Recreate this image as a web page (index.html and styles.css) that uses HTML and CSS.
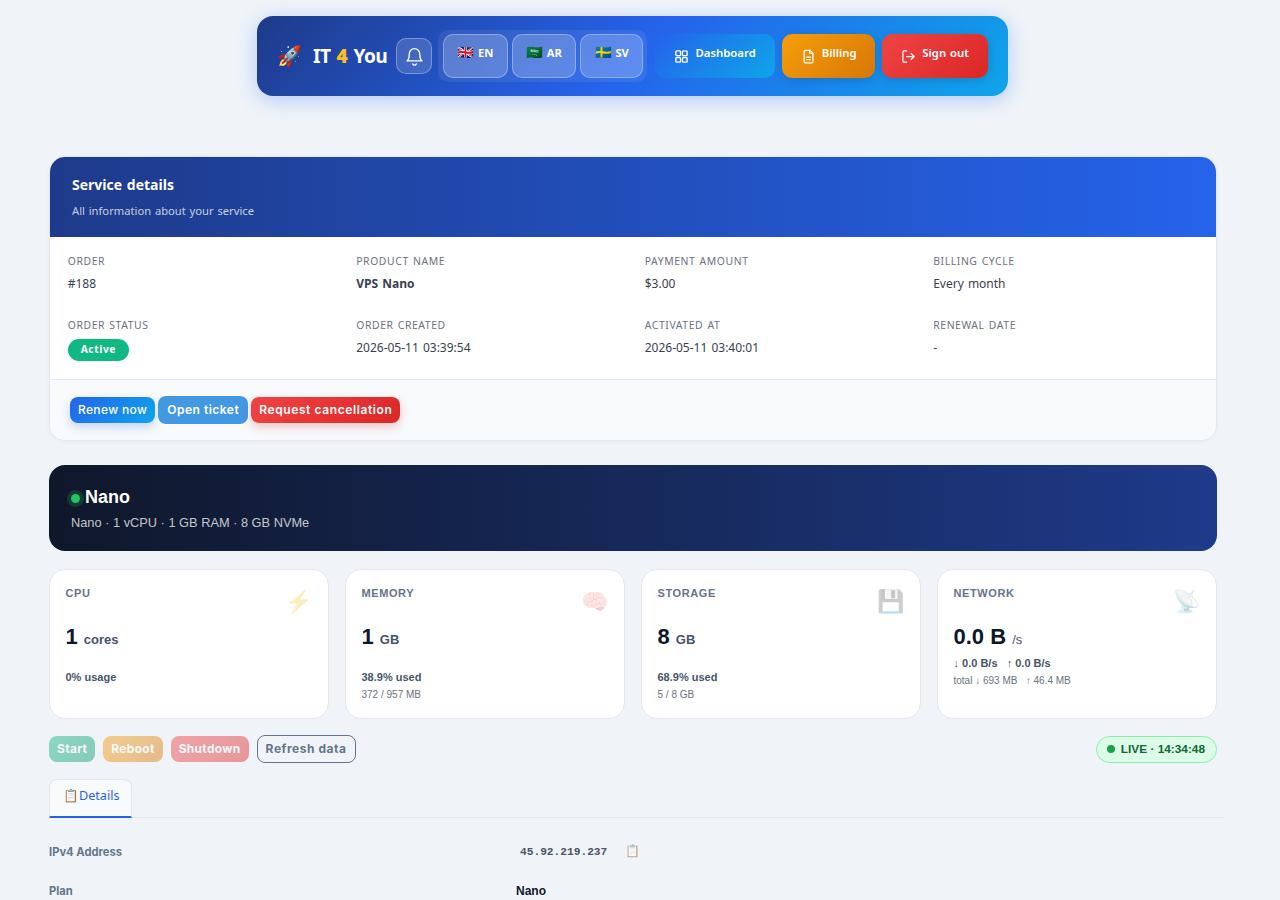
FILE: index.html
```html
<!DOCTYPE html>
<html lang="en">
<head>
    <meta charset="UTF-8">
    <meta name="viewport" content="width=device-width, initial-scale=1.0">
    <title>Service details - IT 4 You</title>
    <link rel="stylesheet" href="styles.css">
</head>
<body>
    <div class="page">
        <!-- Top navigation -->
        <nav class="navbar">
            <a class="brand"><span class="brand-icon">🚀</span><span class="brand-text">IT <b>4</b> You</span></a>
            <button class="bell" aria-label="Notifications">
                <svg width="21" height="21" viewBox="0 0 24 24" fill="none" stroke="currentColor" stroke-width="1.5" stroke-linecap="round" stroke-linejoin="round"><path d="M18 9a6 6 0 0 0-12 0c0 6-2.5 8-2.5 8h17S18 15 18 9"/><path d="M10 20.5a2.2 2.2 0 0 0 4 0"/></svg>
            </button>
            <div class="lang-group">
                <a class="lang"><span class="flag">🇬🇧</span> EN</a>
                <a class="lang"><span class="flag">🇸🇦</span> AR</a>
                <a class="lang"><span class="flag">🇸🇪</span> SV</a>
            </div>
            <a class="nav-btn nav-blue">
                <svg width="15" height="15" viewBox="0 0 24 24" fill="none" stroke="currentColor" stroke-width="2.2" stroke-linejoin="round"><rect x="3" y="3" width="7.5" height="7.5" rx="1.5"/><rect x="13.5" y="3" width="7.5" height="7.5" rx="1.5"/><rect x="3" y="13.5" width="7.5" height="7.5" rx="1.5"/><rect x="13.5" y="13.5" width="7.5" height="7.5" rx="1.5"/></svg>
                <span>Dashboard</span>
            </a>
            <a class="nav-btn nav-orange">
                <svg width="15" height="15" viewBox="0 0 24 24" fill="none" stroke="currentColor" stroke-width="2" stroke-linecap="round" stroke-linejoin="round"><path d="M14 2H7a2 2 0 0 0-2 2v16a2 2 0 0 0 2 2h10a2 2 0 0 0 2-2V7z"/><path d="M14 2v5h5"/><path d="M9 13h6M9 17h6"/></svg>
                <span>Billing</span>
            </a>
            <a class="nav-btn nav-red">
                <svg width="15" height="15" viewBox="0 0 24 24" fill="none" stroke="currentColor" stroke-width="2" stroke-linecap="round" stroke-linejoin="round"><path d="M9 21H5a2 2 0 0 1-2-2V5a2 2 0 0 1 2-2h4"/><path d="M16 17l5-5-5-5"/><path d="M21 12H9"/></svg>
                <span>Sign out</span>
            </a>
        </nav>

        <!-- Service details card -->
        <section class="service-card">
            <div class="service-head">
                <h2>Service details</h2>
                <p>All information about your service</p>
            </div>
            <div class="service-grid">
                <div class="field"><label>Order</label><div>#188</div></div>
                <div class="field"><label>Product name</label><div class="strong">VPS Nano</div></div>
                <div class="field"><label>Payment amount</label><div>$3.00</div></div>
                <div class="field"><label>Billing cycle</label><div>Every month</div></div>
                <div class="field"><label>Order status</label><div><span class="badge">Active</span></div></div>
                <div class="field"><label>Order created</label><div>2026-05-11 03:39:54</div></div>
                <div class="field"><label>Activated at</label><div>2026-05-11 03:40:01</div></div>
                <div class="field"><label>Renewal date</label><div>-</div></div>
            </div>
            <div class="service-actions">
                <a class="btn btn-renew">Renew now</a>
                <a class="btn btn-ticket">Open ticket</a>
                <a class="btn btn-cancel">Request cancellation</a>
            </div>
        </section>

        <!-- VPS panel -->
        <section class="vps-head">
            <h2><span class="dot"></span>Nano</h2>
            <p>Nano · 1 vCPU · 1 GB RAM · 8 GB NVMe</p>
        </section>

        <div class="stats">
            <div class="stat">
                <div class="stat-label">CPU</div>
                <span class="stat-icon">⚡</span>
                <div class="stat-value">1 <small>cores</small></div>
                <div class="stat-sub">0% usage</div>
            </div>
            <div class="stat">
                <div class="stat-label">Memory</div>
                <span class="stat-icon">🧠</span>
                <div class="stat-value">1 <small>GB</small></div>
                <div class="stat-sub">38.9% used</div>
                <div class="stat-note">372 / 957 MB</div>
            </div>
            <div class="stat">
                <div class="stat-label">Storage</div>
                <span class="stat-icon">💾</span>
                <div class="stat-value">8 <small>GB</small></div>
                <div class="stat-sub">68.9% used</div>
                <div class="stat-note">5 / 8 GB</div>
            </div>
            <div class="stat">
                <div class="stat-label">Network</div>
                <span class="stat-icon">📡</span>
                <div class="stat-value">0.0 B <small class="thin">/s</small></div>
                <div class="stat-sub tight">↓ 0.0 B/s &nbsp; ↑ 0.0 B/s</div>
                <div class="stat-note">total ↓ 693 MB &nbsp; ↑ 46.4 MB</div>
            </div>
        </div>

        <div class="toolbar">
            <a class="btn dim btn-start">Start</a>
            <a class="btn dim btn-reboot">Reboot</a>
            <a class="btn dim btn-shutdown">Shutdown</a>
            <a class="btn btn-refresh">Refresh data</a>
            <span class="live"><i></i>LIVE · 14:34:48</span>
        </div>

        <div class="tabs">
            <a class="tab active">📋Details</a>
        </div>

        <div class="detail-row">
            <div class="detail-key">IPv4 Address</div>
            <div class="detail-val"><code>45.92.219.237</code><span class="copy">📋</span></div>
        </div>
        <div class="detail-row">
            <div class="detail-key">Plan</div>
            <div class="detail-val plain">Nano</div>
        </div>
    </div>
</body>
</html>
```

FILE: styles.css
```css
html, body {
    height: 900px;
    overflow: hidden;
}
body {
    margin: 0;
    background-color: #f0f4f9;
    font-family: "Noto Kufi Arabic", "Noto Sans", sans-serif;
    color: #111827;
}
a {
    text-decoration: none;
}
.page {
    width: 1184px;
    margin-left: 41px;
    display: flow-root;
}

/* Navbar */
.navbar {
    width: 751px;
    height: 80px;
    box-sizing: border-box;
    margin: 16px 0 0 216px;
    padding: 0 20px;
    display: flex;
    align-items: center;
    border-radius: 16px;
    color: white;
    background: linear-gradient(135deg, #1e3a8a 0%, #2563eb 50%, #0ea5e9 100%);
    box-shadow: 0 4px 20px rgba(37, 99, 235, 0.3);
}
.brand {
    display: flex;
    align-items: center;
    gap: 11px;
    width: 119px;
    flex-shrink: 0;
}
.brand-icon {
    font-size: 20px;
}
.brand-text {
    font-size: 19.2px;
    font-weight: 700;
    letter-spacing: -0.5px;
    white-space: nowrap;
}
.brand-text b {
    color: #fbbf24;
}
.bell {
    width: 36px;
    height: 36px;
    padding: 0;
    flex-shrink: 0;
    display: flex;
    align-items: center;
    justify-content: center;
    color: white;
    background: rgba(255, 255, 255, 0.15);
    border: 1px solid rgba(255, 255, 255, 0.3);
    border-radius: 10px;
}
.lang-group {
    display: flex;
    gap: 4px;
    padding: 4px 4px 4px 5px;
    margin: 0 8px 0 6px;
    border-radius: 10px;
    background: rgba(255, 255, 255, 0.08);
}
.lang {
    height: 44px;
    box-sizing: border-box;
    padding: 9px 13.3px 0;
    font-size: 11.2px;
    font-weight: 700;
    line-height: 18px;
    white-space: nowrap;
    color: white;
    background: rgba(255, 255, 255, 0.2);
    border: 1px solid rgba(255, 255, 255, 0.3);
    border-radius: 10px;
}
.flag {
    font-size: 13.5px;
}
.nav-btn {
    height: 44px;
    box-sizing: border-box;
    flex-shrink: 0;
    display: flex;
    align-items: center;
    justify-content: center;
    gap: 6px;
    margin-left: 7px;
    font-size: 11.3px;
    font-weight: 600;
    color: white;
    border-radius: 10px;
}
.nav-btn span {
    margin-top: -6px;
}
.nav-blue {
    width: 120px;
    margin-left: 0;
    background: linear-gradient(135deg, #2563eb, #0ea5e9);
}
.nav-orange {
    width: 93px;
    background: linear-gradient(135deg, #f59e0b, #d97706);
    box-shadow: 0 2px 8px rgba(0, 0, 0, 0.15);
}
.nav-red {
    width: 106px;
    background: linear-gradient(135deg, #ef4444, #dc2626);
    box-shadow: 0 2px 8px rgba(0, 0, 0, 0.15);
}

/* Service card */
.service-card {
    width: 1168px;
    box-sizing: border-box;
    margin: 60px 0 0 8px;
    background: white;
    border: 1px solid #e2e8f0;
    border-radius: 16px;
    overflow: hidden;
    box-shadow: 0 1px 4px rgba(0, 0, 0, 0.04);
}
.service-head {
    height: 80px;
    box-sizing: border-box;
    padding: 18px 22px 0;
    color: white;
    background: linear-gradient(90deg, #1e3a8a, #2563eb);
}
.service-head h2 {
    margin: 0;
    font-size: 14px;
    font-weight: 700;
    line-height: 22px;
}
.service-head p {
    margin: 6px 0 0;
    font-size: 11.2px;
    line-height: 18px;
    color: rgba(255, 255, 255, 0.75);
}
.service-grid {
    display: grid;
    grid-template-columns: repeat(4, 1fr);
    row-gap: 18px;
    column-gap: 24px;
    padding: 16px 18.3px 16px 17.7px;
    border-bottom: 1px solid #e2e8f0;
    font-size: 12px;
    color: #374151;
}
.field {
    height: 46px;
}
.field label {
    display: block;
    margin-bottom: 2px;
    font-size: 10.4px;
    line-height: 18px;
    letter-spacing: 0.6px;
    text-transform: uppercase;
    color: #6b7280;
}
.field > div {
    line-height: 22px;
}
.field .strong {
    font-weight: 700;
}
.badge {
    display: inline-block;
    margin-top: 2px;
    padding: 0 13px;
    font-size: 10.4px;
    font-weight: 700;
    letter-spacing: 0.5px;
    line-height: 22px;
    color: white;
    background: #10b981;
    border-radius: 11px;
}
.service-actions {
    display: flex;
    align-items: center;
    gap: 3px;
    height: 60px;
    padding: 0 20px;
    background: #f8fafc;
}

/* Buttons */
.btn {
    display: inline-block;
    box-sizing: border-box;
    height: 26px;
    padding: 0 8px;
    font-family: Inter, Arial, sans-serif;
    font-size: 12px;
    font-weight: 600;
    line-height: 26px;
    letter-spacing: 0.6px;
    white-space: nowrap;
    color: white;
    border-radius: 8px;
}
.btn-renew {
    font-weight: 500;
    letter-spacing: 0.35px;
    background: linear-gradient(135deg, #2563eb, #0ea5e9);
    box-shadow: 0 4px 10px rgba(37, 99, 235, 0.25);
}
.btn-ticket {
    height: 28px;
    line-height: 28px;
    padding: 0 9px;
    letter-spacing: 0.5px;
    background: #4299e1;
}
.btn-cancel {
    background: linear-gradient(135deg, #ef4444, #dc2626);
    box-shadow: 0 4px 10px rgba(220, 38, 38, 0.25);
}

/* VPS header */
.vps-head {
    width: 1168px;
    height: 86px;
    box-sizing: border-box;
    margin: 24px 0 0 8px;
    padding: 21px 22px 0;
    color: white;
    font-family: "Liberation Sans", Arial, sans-serif;
    border-radius: 16px;
    background: linear-gradient(90deg, #0f172a, #1e3a8a);
}
.vps-head h2 {
    margin: 0;
    display: flex;
    align-items: center;
    font-size: 18px;
    font-weight: 700;
    line-height: 22px;
}
.dot {
    width: 9px;
    height: 9px;
    margin: 2px 5px 0 0;
    border-radius: 50%;
    background: #22c55e;
    box-shadow: 0 0 0 4px rgba(34, 197, 94, 0.2);
}
.vps-head p {
    margin: 6px 0 0;
    font-size: 12.8px;
    line-height: 18px;
    color: rgba(255, 255, 255, 0.75);
}

/* Stat cards */
.stats {
    width: 1168px;
    margin: 18px 0 0 8px;
    display: grid;
    grid-template-columns: repeat(4, 1fr);
    gap: 16px;
    font-family: "Liberation Sans", Arial, sans-serif;
}
.stat {
    position: relative;
    height: 150px;
    box-sizing: border-box;
    padding: 16px 16px 16px 15.5px;
    background: white;
    border: 1px solid #e2e8f0;
    border-radius: 16px;
}
.stat-label {
    font-size: 11px;
    font-weight: 700;
    line-height: 15px;
    letter-spacing: 0.6px;
    text-transform: uppercase;
    color: #64748b;
}
.stat-icon {
    position: absolute;
    top: 18px;
    right: 16px;
    font-size: 22px;
    line-height: 28px;
    opacity: 0.3;
}
.stat-value {
    margin-top: 20px;
    font-size: 22px;
    font-weight: 700;
    line-height: 32px;
    color: #0f172a;
}
.stat-value small {
    font-size: 13px;
    color: #475569;
}
.stat-value small.thin {
    font-weight: 400;
}
.stat-sub {
    margin-top: 13px;
    font-size: 11px;
    font-weight: 700;
    line-height: 16px;
    color: #475569;
}
.stat-sub.tight {
    margin-top: -1px;
}
.stat-note {
    margin-top: 2px;
    font-size: 10px;
    line-height: 16px;
    color: #6b7280;
}

/* Toolbar */
.toolbar {
    width: 1168px;
    height: 28px;
    margin: 16px 0 0 8px;
    display: flex;
    align-items: center;
    gap: 8px;
}
.toolbar .btn {
    font-weight: 700;
    letter-spacing: 0.3px;
}
.dim {
    opacity: 0.45;
}
.btn-start {
    background: linear-gradient(135deg, #10b981, #059669);
}
.btn-reboot {
    background: linear-gradient(135deg, #f59e0b, #d97706);
}
.btn-shutdown {
    background: linear-gradient(135deg, #ef4444, #dc2626);
}
.toolbar .btn.btn-refresh {
    height: 28px;
    line-height: 26px;
    letter-spacing: 0.55px;
    color: #64748b;
    background: transparent;
    border: 1px solid #64748b;
}
.live {
    display: flex;
    align-items: center;
    height: 27px;
    box-sizing: border-box;
    margin-left: auto;
    padding: 0 11px 0 10px;
    font-family: "Liberation Sans", Arial, sans-serif;
    font-size: 11.84px;
    font-weight: 700;
    color: #166534;
    background: #dcfce7;
    border: 1px solid #86efac;
    border-radius: 14px;
}
.live i {
    width: 8px;
    height: 8px;
    margin-right: 6px;
    border-radius: 50%;
    background: #16a34a;
}

/* Tabs */
.tabs {
    margin: 16px 0 0 8px;
    width: 1176px;
    border-bottom: 1px solid #e2e8f0;
    height: 38px;
}
.tab {
    display: inline-block;
    box-sizing: border-box;
    height: 39px;
    padding: 0 12px 0 13px;
    font-size: 12.6px;
    line-height: 33px;
    color: #2563eb;
    background: #f8fafc;
    border: 1px solid #e2e8f0;
    border-bottom: 2px solid #2563eb;
    border-radius: 8px 8px 0 0;
}

/* Detail rows */
.detail-row {
    display: flex;
    align-items: center;
    height: 39px;
    margin-left: 8px;
    font-family: Inter, Arial, sans-serif;
    font-size: 11.2px;
}
.tabs + .detail-row {
    margin-top: 13px;
}
.detail-key {
    width: 467px;
    padding-top: 2px;
    font-weight: 700;
    color: #64748b;
}
.detail-val.plain {
    padding-top: 2px;
    font-family: "Liberation Sans", Arial, sans-serif;
    font-size: 12px;
    font-weight: 700;
    color: #0f172a;
}
.detail-val code {
    margin-left: 4px;
    font-family: "Liberation Mono", monospace;
    font-size: 11.2px;
    font-weight: 700;
    color: #4b5563;
}
.copy {
    margin-left: 18px;
    font-size: 12px;
    opacity: 0.7;
}
```
